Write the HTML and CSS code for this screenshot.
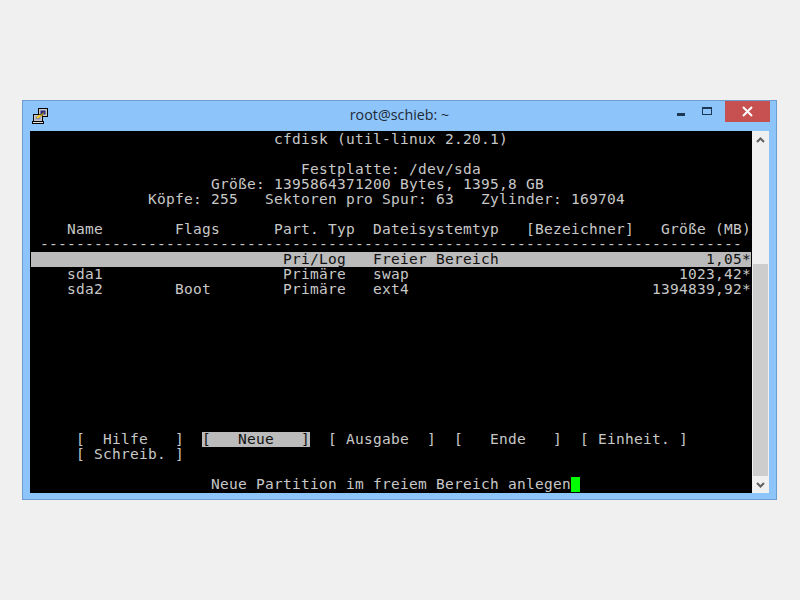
FILE: index.html
```html
<!DOCTYPE html>
<html lang="de">
<head>
<meta charset="utf-8">
<title>root@schieb: ~</title>
<link rel="stylesheet" href="styles.css">
</head>
<body>
<div class="window">
  <div class="titlebar">
    <div class="title-left">
      <svg class="app-icon" width="16" height="16" viewBox="0 0 16 16">
        <rect x="6.5" y="0.5" width="9" height="8" fill="#c8c8c8" stroke="#000"/>
        <rect x="8.5" y="2.5" width="5" height="4" fill="#2a2a80"/>
        <rect x="1.5" y="6.5" width="9" height="7" fill="#c8c8c8" stroke="#000"/>
        <rect x="3.5" y="8.5" width="5" height="3" fill="#8a8ad0"/>
        <rect x="0.5" y="13.5" width="11" height="2" fill="#e0e0e0" stroke="#000"/>
        <path d="M4 9.5 L8.5 6 L8 8 L12 4 L10 8 L10.5 7 L6 10.5 Z" fill="#ffe030" stroke="#a08000" stroke-width="0.4"/>
      </svg>
    </div>
    <div class="title">root@schieb: ~</div>
    <div class="controls">
      <div class="ctl"><span class="min"></span></div>
      <div class="ctl"><span class="max"></span></div>
      <div class="close">
        <svg width="11" height="11" viewBox="0 0 11 11"><path d="M1 1 L10 10 M10 1 L1 10" stroke="#fff" stroke-width="2" fill="none"/></svg>
      </div>
    </div>
  </div>
  <div class="client">
    <div class="terminal">
      <div class="ln">                           cfdisk (util-linux 2.20.1)</div>
      <div class="ln"></div>
      <div class="ln">                              Festplatte: /dev/sda</div>
      <div class="ln">                    Größe: 1395864371200 Bytes, 1395,8 GB</div>
      <div class="ln">             Köpfe: 255   Sektoren pro Spur: 63   Zylinder: 169704</div>
      <div class="ln"></div>
      <div class="ln">    Name        Flags      Part. Typ  Dateisystemtyp   [Bezeichner]   Größe (MB)</div>
      <div class="ln"> ------------------------------------------------------------------------------</div>
      <div class="ln sel">                            Pri/Log   Freier Bereich                       1,05*</div>
      <div class="ln">    sda1                    Primäre   swap                              1023,42*</div>
      <div class="ln">    sda2        Boot        Primäre   ext4                           1394839,92*</div>
      <div class="ln"></div>
      <div class="ln"></div>
      <div class="ln"></div>
      <div class="ln"></div>
      <div class="ln"></div>
      <div class="ln"></div>
      <div class="ln"></div>
      <div class="ln"></div>
      <div class="ln"></div>
      <div class="ln">     [  Hilfe   ]  <span class="btn">[   Neue   ]</span>  [ Ausgabe  ]  [   Ende   ]  [ Einheit. ]</div>
      <div class="ln">     [ Schreib. ]</div>
      <div class="ln"></div>
      <div class="ln">                    Neue Partition im freiem Bereich anlegen<span class="cursor"> </span></div>
    </div>
    <div class="scrollbar">
      <div class="arrow">
        <svg width="9" height="6" viewBox="0 0 9 6"><path d="M1 5 L4.5 1.5 L8 5" stroke="#606060" stroke-width="2" fill="none"/></svg>
      </div>
      <div class="track"><div class="thumb"></div></div>
      <div class="arrow">
        <svg width="9" height="6" viewBox="0 0 9 6"><path d="M1 1 L4.5 4.5 L8 1" stroke="#606060" stroke-width="2" fill="none"/></svg>
      </div>
    </div>
  </div>
</div>
</body>
</html>
```
FILE: styles.css
```css
html, body { margin: 0; padding: 0; }
body {
  width: 800px;
  height: 600px;
  background: #f0f0f0;
  padding: 100px 0 0 22px;
  box-sizing: border-box;
  overflow: hidden;
}
.window {
  width: 755px;
  height: 400px;
  box-sizing: border-box;
  background: #8dc4fa;
  border: 1px solid #6d9cd0;
  display: flex;
  flex-direction: column;
}
.titlebar {
  height: 30px;
  flex: none;
  display: grid;
  grid-template-columns: 1fr auto 1fr;
}
.title-left { padding: 7px 0 0 9px; }
.app-icon { display: block; }
.title {
  font-family: "Open Sans", sans-serif;
  font-size: 14.3px;
  line-height: 28px;
  color: #1c2a38;
}
.controls {
  display: flex;
  justify-content: flex-end;
  padding-right: 6px;
  height: 21px;
}
.ctl {
  width: 26px;
  display: flex;
  justify-content: center;
}
.min {
  display: block;
  width: 8px;
  height: 3px;
  margin-top: 12px;
  background: #1b3857;
}
.max {
  display: block;
  width: 10px;
  height: 8px;
  margin-top: 6px;
  box-sizing: border-box;
  border: 1px solid #1b3857;
  border-top-width: 2px;
}
.close {
  width: 45px;
  height: 21px;
  margin-left: 5px;
  background: #c75050;
  display: flex;
  align-items: center;
  justify-content: center;
}
.client {
  display: flex;
  margin: 0 7px;
  height: 362px;
}
.terminal {
  width: 722px;
  box-sizing: border-box;
  padding: 1px;
  background: #000;
  color: #c8c8c8;
  font-family: "DejaVu Sans Mono", monospace;
  font-size: 14.5px;
  letter-spacing: 0.27px;
  overflow: hidden;
}
.ln {
  height: 15px;
  line-height: 15px;
  white-space: pre;
}
.sel { background: #bbb; color: #111; }
.btn { display: inline-block; background: #bbb; color: #111; height: 15px; }
.cursor { display: inline-block; width: 9px; height: 15px; background: #00ff00; vertical-align: top; }
.scrollbar {
  width: 17px;
  background: #f0f0f0;
  display: flex;
  flex-direction: column;
}
.arrow {
  height: 17px;
  flex: none;
  display: flex;
  align-items: center;
  justify-content: center;
}
.track {
  flex: 1;
  display: flex;
  flex-direction: column;
  justify-content: flex-end;
}
.thumb { height: 212px; background: #cdcdcd; margin: 0 1px; }
```
